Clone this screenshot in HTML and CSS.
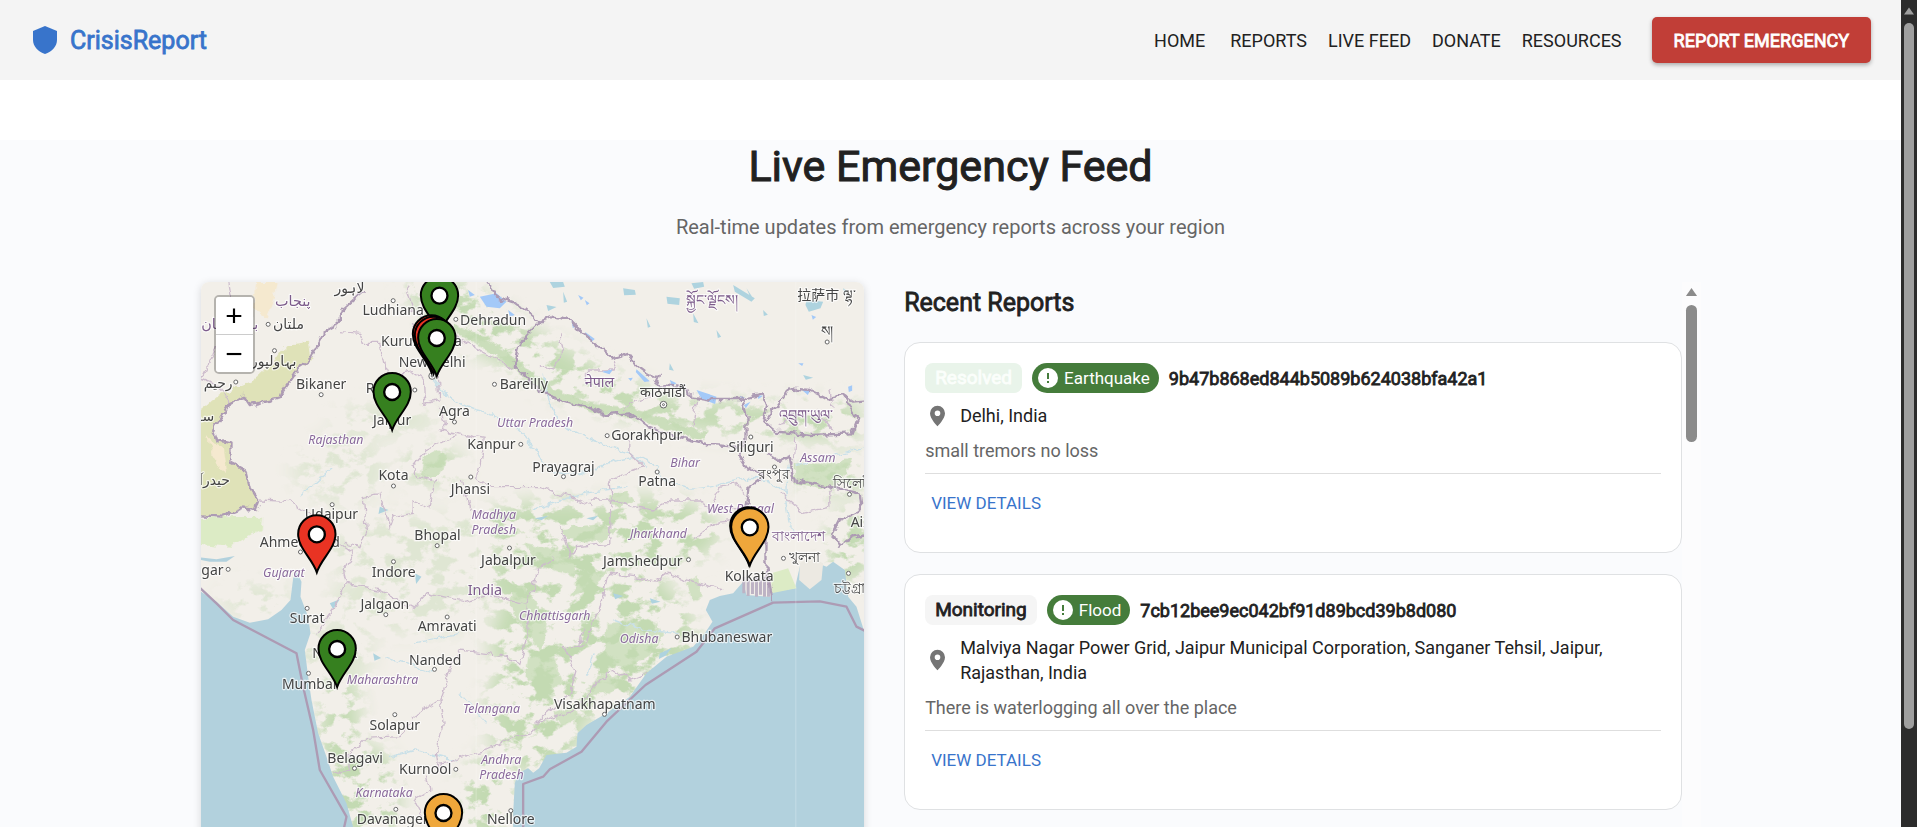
FILE: index.html
```html
<!DOCTYPE html>
<html lang="en">
<head>
<meta charset="utf-8">
<title>CrisisReport - Live Emergency Feed</title>
<link rel="stylesheet" href="styles.css">
</head>
<body>
<div class="page">
  <header class="topbar">
    <a class="brand" href="#">
      <svg class="brand-icon" viewBox="0 0 24 28" aria-hidden="true"><path d="M12 0 24 5v9c0 6-5 12-12 14C5 26 0 20 0 14V5z"/></svg>
      <span class="strong">CrisisReport</span>
    </a>
    <nav class="menu">
      <a class="first" href="#">HOME</a>
      <a href="#">REPORTS</a>
      <a href="#">LIVE FEED</a>
      <a href="#">DONATE</a>
      <a href="#">RESOURCES</a>
      <button class="report strong" type="button">REPORT EMERGENCY</button>
    </nav>
  </header>

  <main class="feed">
    <h1 class="title">Live Emergency Feed</h1>
    <p class="subtitle">Real-time updates from emergency reports across your region</p>

    <div class="columns">
      <section class="map" aria-label="Map of reports">
        <svg class="map-art" viewBox="3 6 1992 1875" preserveAspectRatio="xMidYMin slice">
          <defs>
            <filter id="veg" x="0" y="0" width="1" height="1" color-interpolation-filters="sRGB">
              <feTurbulence type="fractalNoise" baseFrequency="0.016 0.022" numOctaves="5" seed="11"/>
              <feColorMatrix values="0 0 0 0 .765  0 0 0 0 .855  0 0 0 0 .70  0 9 0 0 -4.5"/>
            </filter>
            <filter id="soft"><feGaussianBlur stdDeviation="28"/></filter>
            <filter id="jag" x="-.1" y="-.1" width="1.2" height="1.2">
              <feTurbulence type="fractalNoise" baseFrequency="0.035" numOctaves="3" seed="4"/>
              <feDisplacementMap in="SourceGraphic" scale="26" xChannelSelector="R" yChannelSelector="G"/>
            </filter>
            <mask id="vegmask" maskUnits="userSpaceOnUse" x="0" y="0" width="2000" height="1890">
              <g filter="url(#soft)" fill="#fff">
                <path d="M600 6H790L1000 150 1200 260 1400 350 1640 370 1980 370V480L1640 470 1400 440 1230 400 1060 340 800 200 680 120z"/>
                <ellipse cx="1070" cy="830" rx="330" ry="170"/>
                <ellipse cx="1180" cy="1080" rx="310" ry="230"/>
                <ellipse cx="1330" cy="760" rx="230" ry="110"/>
                <ellipse cx="1010" cy="1290" rx="150" ry="190"/>
                <ellipse cx="420" cy="1380" rx="60" ry="260"/>
                <ellipse cx="510" cy="1560" rx="90" ry="160"/>
                <ellipse cx="860" cy="1560" rx="80" ry="130"/>
                <ellipse cx="700" cy="560" rx="90" ry="50"/>
                <ellipse cx="1900" cy="590" rx="110" ry="50"/>
                <ellipse cx="1950" cy="800" rx="70" ry="110"/>
              </g>
              <g filter="url(#soft)" fill="#666">
                <ellipse cx="420" cy="570" rx="140" ry="100"/>
                <ellipse cx="650" cy="820" rx="260" ry="120"/>
                <ellipse cx="640" cy="970" rx="260" ry="90"/>
                <ellipse cx="400" cy="1120" rx="120" ry="90"/>
                <ellipse cx="560" cy="420" rx="160" ry="50"/>
                <ellipse cx="170" cy="960" rx="110" ry="50"/>
              </g>
            </mask>
            <g id="pin" stroke="#000">
              <path stroke-width="6" d="M0 0C-14-42-56-72-56-115a56 56 0 0 1 112 0C56-72 14-42 0 0z"/>
              <circle cy="-114" r="24" fill="#fff" stroke-width="7"/>
            </g>
          </defs>

          <path class="land" d="M3 6h1992v1880H3z"/>
          <g filter="url(#jag)">
            <path class="scrub" d="M330 185 340 240 300 260 250 330 240 355 150 375 130 345 90 370 40 450 50 480 95 490 95 550 135 570 145 610 175 660 165 690 130 685 70 710-20 705V480L-10 400 60 345 160 300 225 240 260 195z"/>
            <path class="sand" d="M170 6h60l-10 60-20 50-40-30zM20 470l50 40 10 70-30-20z"/>
            <path class="marsh" d="M-20 715 60 712 190 710 185 750 90 800-20 790z"/>
            <path class="wood" d="M670 530l40-20 30 20-10 40-50 30-20-20zM1785 555l90 5 80-30-30 80-60 15-80-15zM1080 745l100-10 80 15-70 35-90-5zM1220 650l60-15 20 30-40 20z"/>
            <path class="wood" d="M970 790l70 15 80 30 10 60-60-20-60-30zM940 900l60 50 40 80-10 90-50-60-50-80zM990 1120l70 10 30 80-50 30-60-50zM1220 1030l110-10 60 40-30 60-90 50-60-20z"/>
            <path class="wood" d="M1455 910l40-20 10 60-30 10zM1140 880l80-10-30 50-80 30zM1200 1180l70 20-40 40-60 10zM1060 1300l60-20 10 40-50 20z"/>
            <path class="range" d="M760 140 900 215 1040 330 1180 385 1290 395 1420 440 1520 470"/>
          </g>
          <g mask="url(#vegmask)"><path filter="url(#veg)" d="M3 6h1992v1880H3z"/></g>

          <g class="sea">
            <path d="M-20 920 50 965 100 1010 150 1028 205 1018 245 990 272 960 280 895 290 875 305 905 302 950 325 1010 332 1060 315 1110 325 1190 335 1260 355 1360 380 1430 400 1490 440 1570 460 1641 490 1890H-20z"/>
            <path d="M-20 830 50 838 105 828 80 845 30 845-20 835z"/>
            <path d="M940 1890V1600L945 1510 955 1480 985 1465 1000 1478 1018 1465 1040 1425 1100 1418 1130 1400 1133 1360 1160 1335 1220 1300 1290 1250 1340 1180 1400 1130 1480 1100 1515 1060 1538 1025 1518 990 1530 960 1560 948 1600 940 1630 905 1640 945 1710 950 1720 935 1785 925 1800 860 1830 840 1880 860 1900 845 1935 870 1945 950 1970 980 1995 1060 2010 1890z"/>
          </g>
          <path class="delta-land" d="M1798 900 1800 850 1830 830 1870 850 1865 900 1830 928z"/>
          <path class="delta" d="M1632 940V890M1645 948V885M1658 942V900M1670 950V892M1682 944V900M1694 950V890M1706 950V900"/>
          <path class="marsh" d="M1715 880l50-15 25 60-75 15z"/>
          <g class="water">
            <path d="M1050 6l40 0 5 14-35 4zM1090 35l12 30-10 3zM1270 25l35 5 3 14-35 2zM1400 50l40 5-2 20-35-4zM1475 10l35-4 3 14-30 6zM1600 15l65 40-10 10-50-30zM1340 115l12 25-8 3zM1480 100l16 30-14-4zM1820 60l50 5-8 20-35 10-10-20zM1410 250l12 22-14-3zM1640 25l20 30-6 2zM1690 90l14 14-12 4zM1550 150l14 20-10 4zM1810 285l30 8-22 6zM1040 75l30 6-25 12zM1930 25l14 8-10 8z"/>
            <path d="M540 680l26 10-30 12zM645 880l20 10-16 22zM390 970l30-12-20 30zM520 1120l24 14-20 8zM1240 940l30 8-24 10zM1350 955l32 10-26 6zM1380 1120l35-15-18 22-20 10zM1160 715l35-8-15 14zM1005 715l40-8-20 14z"/>
          </g>
          <g class="lake">
            <path d="M805 30l20 15-15 5zM840 50l50-10 30 25-20 20-40-5zM925 90l20 15-15 5zM1135 45l16 8-8 8zM1155 60l14 10-8 6zM1115 120l12 20-8 4zM1155 155l30 22-10 8zM1205 275l36-8-12 16zM1310 268l40 36-16 2-26-30zM1285 295l14-2-6 10zM1410 300l20 10-14 8zM1490 330l60 20-4 22-40-14zM1620 348l14 4-6 10zM1632 375l20-10-14 20zM1670 345l20 2-14 10zM1800 325l30 8-6 12zM1945 320l12-4v16l-10 4zM1835 105l14 6-10 8zM1795 250l16 0-4 8z"/>
          </g>
          <g class="river" filter="url(#jag)">
            <path d="M700 300Q760 380 860 400T1010 520 1200 560 1380 575 1560 610 1760 640"/>
            <path d="M1030 280Q1040 370 1080 420T1290 520L1340 560M1770 560Q1750 600 1765 690T1780 760M1790 560 1995 500M1000 690 1150 640 1280 620"/>
            <path d="M640 1090 780 1060M560 1130 700 1180M1240 1020 1330 1050 1430 1060M1180 1120 1160 1190M570 1430 650 1410 770 1440M400 560 300 650M780 1240 860 1330"/>
          </g>

          <g class="state" filter="url(#jag)">
            <path d="M415 155 480 160 490 190 540 190 550 240 560 290 640 275 670 295 675 370 720 360 715 280 690 180 640 130M720 380 740 430 720 450 850 475 840 560 830 600 880 620 1020 620 1070 640 1140 660 1180 680M780 460 680 510 640 560 650 590 710 600 690 680 640 660 640 700 580 710 570 740 540 640 490 650 500 760 480 800 440 790"/>
            <path d="M180 660 270 665 320 700 360 720 420 790 460 820 430 870 440 910 400 990 350 1060M440 910 540 930 640 985 680 940 790 965 870 945 980 970 1000 920 1010 870 1060 830M790 600 810 690 870 700"/>
            <path d="M980 970 985 1060 960 1150 920 1130 860 1120 780 1110 750 1170 720 1260 640 1310 600 1370 500 1375 440 1430 450 1470 400 1480"/>
            <path d="M720 1260 730 1330 710 1420 720 1480M720 1450 860 1410 940 1370 990 1360 1010 1340M680 1490 690 1530 640 1560 670 1620M1090 1100 1130 1170 1110 1240 1010 1330M1090 1100 1150 1100 1200 980 1230 880 1370 900 1400 880 1460 900 1570 930M1140 1100 1150 1040M1010 1330 1130 1290 1200 1200 1240 1170 1290 1200 1340 1180"/>
            <path d="M1170 660 1240 660 1300 680 1360 690 1420 660 1500 660 1530 690 1640 680M1240 680 1230 600 1330 560 1290 520 1290 480M1540 670 1560 620 1600 610 1640 640M1480 780 1550 730 1650 720M1080 740 1110 830 1130 800 1230 790 1230 690M1490 360 1480 440M1250 240 1240 270 1160 270 1160 310M1080 160 1090 210 1060 270 1020 260M1270 390 1310 360 1360 350"/>
            <path d="M1785 470 1780 560M1740 640 1810 700 1890 680 1890 620M1900 380 1890 330M1850 390 1900 450M1780 390 1740 440"/>
            <path d="M90 6 110 130 60 160 40 220 3 300M3 300 60 320 90 370M620 20 640 90 700 130 840 210 940 265"/>
          </g>
          <g class="border" filter="url(#jag)">
            <path d="M490 35 420 95 420 130 375 155 330 240 300 260 250 330 240 355 150 375 130 345 90 370 40 450 50 480 95 490 95 550 135 570 145 610 175 660 165 690 130 685 70 710-20 705"/>
            <path d="M860 6 890 50 940 65 1020 125 1060 110 1110 120 1160 170 1240 235 1290 220 1310 260 1350 290 1380 290 1370 315 1440 320 1480 350 1540 360 1620 360 1640 350 1690 340 1705 380 1690 420 1730 455 1830 465 1960 460 1975 420 1930 345 1960 365 2010 360"/>
            <path d="M1930 345 1880 355 1830 330 1770 325 1700 420M1020 125 960 190 945 260 1010 320 1050 350 1110 370 1160 380 1220 405 1290 400 1340 440 1400 460 1530 495 1610 500 1640 480 1640 400 1625 350"/>
            <path d="M1640 480 1615 520 1640 560 1690 590 1650 620 1640 680 1700 730 1700 860 1720 968M1700 520 1740 545 1770 530 1780 600 1890 620 1980 640 1985 690 1920 720 1900 760 1920 800 1960 770 2010 760"/>
          </g>
          <g class="border">
            <path d="M-20 905 50 970 100 1020 290 1120 310 1220 340 1350 360 1470 440 1610 420 1700"/>
            <path d="M970 1890V1512L1030 1490 1050 1468 1145 1415 1220 1325 1337 1215 1490 1115 1545 1045 1720 968 1860 964 1940 980 1970 1040 2010 1060"/>
          </g>
          <path class="seam" d="M829 6v1880M1788 6v1880"/>

          <g class="region">
            <text x="408" y="492">Rajasthan</text><text x="1006" y="440">Uttar Pradesh</text>
            <text x="1456" y="560">Bihar</text><text x="1854" y="545">Assam</text>
            <text x="1622" y="698">West Bengal</text><text x="1376" y="774">Jharkhand</text>
            <text x="882" y="718">Madhya</text><text x="882" y="762">Pradesh</text>
            <text x="252" y="890">Gujarat</text><text x="1065" y="1020">Chhattisgarh</text>
            <text x="548" y="1212">Maharashtra</text><text x="1318" y="1090">Odisha</text>
            <text x="875" y="1300">Telangana</text><text x="904" y="1452">Andhra</text>
            <text x="905" y="1496">Pradesh</text><text x="553" y="1550">Karnataka</text>
          </g>
          <g class="country">
            <text x="855" y="946">India</text><text x="1199" y="320">नेपाल</text>
            <text x="1820" y="420">འབྲུག་ཡུལ་</text><text x="1795" y="783">বাংলাদেশ</text>
            <text x="1538" y="75">སྐྱོང་ལྗོངས།</text><text x="279" y="78">پنجاب</text><text x="90" y="148">بلوچستان</text>
          </g>
          <g class="city">
            <text x="580" y="106">Ludhiana</text><text x="880" y="134">Dehradun</text>
            <text x="665" y="197">Kurukshetra</text><text x="697" y="262">New Delhi</text>
            <text x="364" y="328">Bikaner</text><text x="972" y="328">Bareilly</text>
            <text x="565" y="340">Rewari</text><text x="577" y="434">Jaipur</text><text x="764" y="408">Agra</text>
            <text x="875" y="508">Kanpur</text><text x="581" y="599">Kota</text>
            <text x="812" y="641">Jhansi</text><text x="395" y="716">Udaipur</text>
            <text x="300" y="800">Ahmedabad</text><text x="713" y="780">Bhopal</text>
            <text x="926" y="854">Jabalpur</text><text x="582" y="892">Indore</text>
            <text x="555" y="986">Jalgaon</text><text x="322" y="1030">Surat</text>
            <text x="742" y="1054">Amravati</text><text x="405" y="1134">Nashik</text>
            <text x="706" y="1154">Nanded</text><text x="328" y="1226">Mumbai</text>
            <text x="585" y="1350">Solapur</text><text x="466" y="1450">Belagavi</text>
            <text x="676" y="1482">Kurnool</text><text x="590" y="1633">Davanagere</text>
            <text x="933" y="1633">Nellore</text><text x="1341" y="480">Gorakhpur</text>
            <text x="1091" y="575">Prayagraj</text><text x="1372" y="618">Patna</text>
            <text x="1654" y="515">Siliguri</text><text x="1329" y="857">Jamshedpur</text>
            <text x="1648" y="902">Kolkata</text><text x="1581" y="1086">Bhubaneswar</text>
            <text x="1215" y="1288">Visakhapatnam</text><text x="38" y="884">gar</text>
            <text x="1389" y="350">काठमाडौं</text><text x="1723" y="598">রংপুর</text>
            <text x="1955" y="624">সিলেট</text><text x="1815" y="845">খুলনা</text>
            <text x="1960" y="938">চট্টগ্রাম</text><text x="1880" y="60">拉萨市 ལྷ་</text>
            <text x="1882" y="168">ས།</text><text x="2015" y="742">Aizawl</text>
            <text x="449" y="40">لاہور</text><text x="266" y="148">ملتان</text>
            <text x="222" y="258">بہاولپور</text><text x="55" y="325">رحیم</text>
            <text x="44" y="614">حیدرآ</text><text x="15" y="422">سو</text>
          </g>
          <g class="dot">
            <circle cx="580" cy="62" r="6"/><circle cx="768" cy="118" r="6"/><circle cx="205" cy="133" r="6"/><circle cx="224" cy="212" r="6"/>
            <circle cx="108" cy="306" r="6"/><circle cx="364" cy="344" r="6"/><circle cx="645" cy="330" r="6"/><circle cx="884" cy="313" r="6"/>
            <circle cx="764" cy="426" r="6"/><circle cx="963" cy="493" r="6"/><circle cx="581" cy="618" r="6"/><circle cx="813" cy="591" r="6"/>
            <circle cx="397" cy="674" r="6"/><circle cx="712" cy="797" r="6"/><circle cx="929" cy="804" r="6"/><circle cx="302" cy="816" r="6"/>
            <circle cx="581" cy="845" r="6"/><circle cx="85" cy="868" r="6"/><circle cx="322" cy="985" r="6"/><circle cx="558" cy="1004" r="6"/>
            <circle cx="742" cy="1011" r="6"/><circle cx="704" cy="1168" r="6"/><circle cx="326" cy="1180" r="6"/><circle cx="585" cy="1304" r="6"/>
            <circle cx="464" cy="1465" r="6"/><circle cx="768" cy="1468" r="6"/><circle cx="588" cy="1588" r="6"/><circle cx="933" cy="1592" r="6"/>
            <circle cx="1222" cy="467" r="6"/><circle cx="1091" cy="590" r="6"/><circle cx="1372" cy="576" r="6"/><circle cx="1653" cy="471" r="6"/>
            <circle cx="1724" cy="561" r="6"/><circle cx="1949" cy="643" r="6"/><circle cx="1466" cy="839" r="6"/><circle cx="1751" cy="835" r="6"/>
            <circle cx="1946" cy="880" r="6"/><circle cx="1432" cy="1071" r="6"/><circle cx="1214" cy="1303" r="6"/><circle cx="1882" cy="186" r="6"/>
            <circle cx="1391" cy="374" r="10"/><circle cx="1391" cy="374" r="3"/><circle cx="697" cy="288" r="10"/><circle cx="697" cy="288" r="3"/>
          </g>

          <g class="safe"><use href="#pin" x="719" y="161"/></g>
          <g class="danger"><use href="#pin" x="695" y="277"/><use href="#pin" x="701" y="281"/><use href="#pin" x="351" y="877"/></g>
          <g class="safe"><use href="#pin" x="711" y="288"/><use href="#pin" x="577" y="450"/><use href="#pin" x="412" y="1221"/></g>
          <g class="warn"><use href="#pin" x="1647" y="853"/><use href="#pin" x="1650" y="856"/><use href="#pin" x="731" y="1713"/></g>
        </svg>
        <div class="zoom">
          <button type="button" aria-label="Zoom in">+</button>
          <button type="button" aria-label="Zoom out">−</button>
        </div>
      </section>

      <section class="reports">
        <div class="list">
          <h2 class="list-title strong">Recent Reports</h2>

          <article class="card">
            <div class="tags">
              <span class="status resolved strong">Resolved</span>
              <span class="kind">
                <svg viewBox="0 0 20 20" aria-hidden="true"><circle cx="10" cy="10" r="10" fill="#fff"/><path d="M9 5h2v6H9zM9 13h2v2H9z" fill="#457c3b"/></svg>
                Earthquake
              </span>
              <span class="id strong">9b47b868ed844b5089b624038bfa42a1</span>
            </div>
            <div class="place">
              <svg viewBox="0 0 16 22" aria-hidden="true"><path d="M8 0a8 8 0 0 0-8 8c0 6 8 14 8 14s8-8 8-14a8 8 0 0 0-8-8zm0 11a3 3 0 1 1 0-6 3 3 0 0 1 0 6z"/></svg>
              <span>Delhi, India</span>
            </div>
            <p class="note">small tremors no loss</p>
            <hr>
            <button class="details" type="button">VIEW DETAILS</button>
          </article>

          <article class="card">
            <div class="tags">
              <span class="status monitoring strong">Monitoring</span>
              <span class="kind">
                <svg viewBox="0 0 20 20" aria-hidden="true"><circle cx="10" cy="10" r="10" fill="#fff"/><path d="M9 5h2v6H9zM9 13h2v2H9z" fill="#457c3b"/></svg>
                Flood
              </span>
              <span class="id strong">7cb12bee9ec042bf91d89bcd39b8d080</span>
            </div>
            <div class="place">
              <svg viewBox="0 0 16 22" aria-hidden="true"><path d="M8 0a8 8 0 0 0-8 8c0 6 8 14 8 14s8-8 8-14a8 8 0 0 0-8-8zm0 11a3 3 0 1 1 0-6 3 3 0 0 1 0 6z"/></svg>
              <span>Malviya Nagar Power Grid, Jaipur Municipal Corporation, Sanganer Tehsil, Jaipur, Rajasthan, India</span>
            </div>
            <p class="note">There is waterlogging all over the place</p>
            <hr>
            <button class="details" type="button">VIEW DETAILS</button>
          </article>
        </div>
        <div class="list-bar" aria-hidden="true">
          <svg viewBox="0 0 12 9"><path d="M6 1 11 8H1z"/></svg>
          <div class="thumb"></div>
        </div>
      </section>
    </div>
  </main>
</div>
<div class="page-bar" aria-hidden="true">
  <svg viewBox="0 0 12 9"><path d="M6 1 11 8H1z"/></svg>
  <div class="thumb"></div>
</div>
</body>
</html>
```
FILE: styles.css
```css
* { box-sizing: border-box; }

body {
  margin: 0;
  height: 100vh;
  display: flex;
  overflow: hidden;
  background: #fff;
  color: #212121;
  font: 18px/25px Roboto, "Liberation Sans", sans-serif;
}
button { font: inherit; cursor: pointer; }
a { color: inherit; text-decoration: none; }
h1, h2, p { margin: 0; font-weight: 400; }

.page { flex: 1; min-width: 0; overflow: hidden; }
.strong { -webkit-text-stroke: 0.8px currentColor; }

/* Top bar */
.topbar {
  height: 80px;
  padding: 0 30px 0 33px;
  display: flex;
  align-items: center;
  justify-content: space-between;
  background: #f4f4f4;
}
.brand { display: flex; align-items: center; gap: 13px; color: #3874cb; font-size: 25px; }
.brand-icon { width: 24px; height: 28px; fill: currentColor; }
.menu { display: flex; align-items: center; gap: 21px; }
.first { margin-right: 4px; }
.report {
  height: 46px;
  margin-left: 9px;
  padding: 0 22px;
  border: 0;
  border-radius: 5px;
  background: #c13e37;
  color: #fff;
  box-shadow: 0 2px 4px rgba(0, 0, 0, .3);
}

/* Feed */
.feed { margin-top: 60px; padding: 0 24px; background: #fafbfd; }
.title { text-align: center; font-size: 43px; line-height: 52px; -webkit-text-stroke: 1px currentColor; }
.subtitle { margin-top: 20px; text-align: center; font-size: 20px; line-height: 30px; color: #666; }
.columns {
  max-width: 1500px;
  margin: 40px auto 0;
  display: grid;
  grid-template-columns: 1fr 1.2fr;
  gap: 40px;
}

/* Map */
.map {
  position: relative;
  height: 625px;
  border-radius: 8px;
  overflow: hidden;
  box-shadow: 0 2px 8px rgba(0, 0, 0, .15);
}
.map-art { display: block; width: 100%; height: 100%; font-family: "Noto Sans", "DejaVu Sans", "Noto Sans CJK SC", sans-serif; }
.land { fill: #f2efe9; }
.scrub { fill: #dfe2b8; }
.sand { fill: #f5e9cf; }
.marsh { fill: #dcebc5; }
.wood { fill: #c8ddb8; opacity: .8; }
.range { fill: none; stroke: #c6dcb6; stroke-width: 26; opacity: .9; }
.sea { fill: #b2d1dd; }
.delta { fill: none; stroke: #bdb3c4; stroke-width: 9; }
.delta-land { fill: #ece9e2; }
.water { fill: #aed3df; }
.lake { fill: #a3c9f8; }
.river { fill: none; stroke: #c9e0e8; stroke-width: 4; }
.state { fill: none; stroke: #cdbccd; stroke-width: 4; }
.border { fill: none; stroke: #ad9bb4; stroke-width: 7; stroke-linejoin: round; }
.seam { stroke: #fff; stroke-width: 2; opacity: .35; }
.region, .country, .city {
  text-anchor: middle;
  paint-order: stroke;
  stroke: rgba(255, 255, 255, .7);
  stroke-width: 7;
  stroke-linejoin: round;
}
.region { fill: #8a6a9c; font-size: 37px; font-style: italic; }
.country { fill: #7d5c8c; font-size: 43px; }
.city { fill: #444; font-size: 42px; }
.dot { fill: #fff; stroke: #666; stroke-width: 3; }
.safe { fill: #36801f; }
.danger { fill: #e93323; }
.warn { fill: #efa73b; }

.zoom {
  position: absolute;
  top: 13px;
  left: 13px;
  display: grid;
  border: 2px solid rgba(0, 0, 0, .25);
  border-radius: 5px;
  background-clip: padding-box;
}
.zoom button {
  width: 37px;
  height: 37px;
  padding: 0;
  border: 0;
  background: #fff;
  color: #000;
  font: 30px/36px "Liberation Sans", sans-serif;
}
.zoom button:first-child { height: 38px; border-bottom: 1px solid #ccc; border-radius: 3px 3px 0 0; }
.zoom button:last-child { border-radius: 0 0 3px 3px; }

/* Reports */
.reports { display: flex; }
.list { flex: 1; min-width: 0; display: grid; gap: 21px; align-content: start; }
.list-title { padding-top: 4px; padding-bottom: 1px; font-size: 25px; line-height: 34px; }
.card {
  padding: 20px 20px 30px;
  border: 1px solid #dfe1e3;
  border-radius: 16px;
  background: #fff;
  display: grid;
  gap: 10px;
  justify-items: start;
}
.tags { display: flex; align-items: center; gap: 10px; }
.status { padding: 0 10px; border-radius: 8px; font-size: 19px; line-height: 30px; }
.resolved { background: #e9f4ea; color: #fbfefb; }
.monitoring { background: #f5f5f5; }
.kind {
  display: flex;
  align-items: center;
  gap: 6px;
  padding: 0 9px 0 6px;
  border-radius: 15px;
  background: #457c3b;
  color: #fff;
  font-size: 17px;
  line-height: 30px;
}
.kind svg { width: 20px; height: 20px; }
.place { display: flex; align-items: center; gap: 15px; padding: 0 20px 0 5px; }
.place svg { width: 15px; height: 22px; flex: none; fill: #757575; }
.note { color: #666; }
.card hr { width: 100%; height: 1px; margin: 0; border: 0; background: #dedede; }
.details { height: 38px; padding: 0 6px; border: 0; background: none; color: #3874cb; font-size: 17px; }

/* Scroll bars */
.list-bar { width: 19px; padding-top: 5px; display: flex; flex-direction: column; align-items: center; gap: 8px; background: #fcfcfd; }
.list-bar svg { width: 15px; height: 10px; fill: #8b8b8b; }
.list-bar .thumb { width: 11px; height: 137px; border-radius: 6px; background: #8b8b8b; }
.page-bar { width: 16px; padding-top: 6px; display: flex; flex-direction: column; align-items: center; gap: 7px; background: #2c2c2c; }
.page-bar svg { width: 12px; height: 10px; fill: #9f9f9f; }
.page-bar .thumb { width: 10px; height: 86%; border-radius: 5px; background: #9f9f9f; }
```
